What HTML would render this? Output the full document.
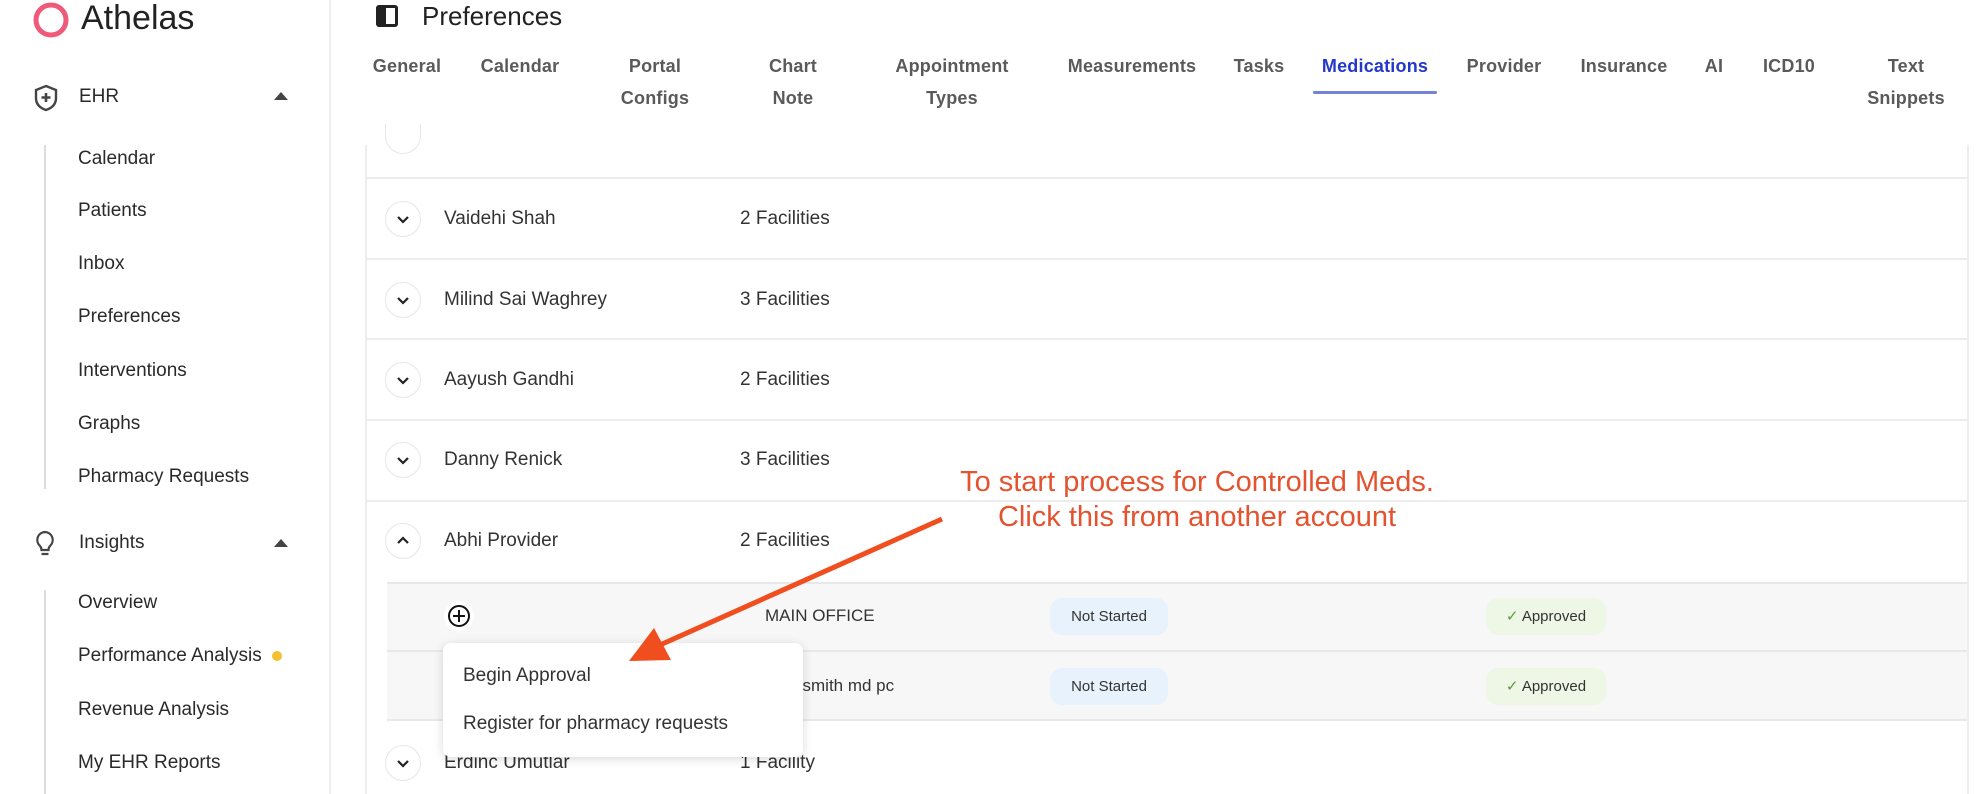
<!DOCTYPE html>
<html><head><meta charset="utf-8"><style>
*{margin:0;padding:0;box-sizing:border-box}
body{width:1983px;height:794px;overflow:hidden;background:#fff;font-family:"Liberation Sans",sans-serif;color:#222;position:relative}
.a{position:absolute;white-space:nowrap}
.side{position:absolute;left:0;top:0;width:331px;height:794px;border-right:2px solid #eee}
.si{position:absolute;left:78px;font-size:19px;color:#2a2a2a;transform:translateY(-50%)}
.tab{position:absolute;font-size:18px;color:#5a5a5a;text-align:center;line-height:32px;transform:translateX(-50%);top:50px;font-weight:bold;letter-spacing:0.2px}
.sep{position:absolute;left:366px;width:1602px;height:2px;background:#ececec}
.chev{position:absolute;width:36px;height:36px;border-radius:50%;border:1px solid #e6e6e6;background:#fff;left:385px}
.chev svg{position:absolute;left:9px;top:9px}
.nm{position:absolute;left:444px;font-size:19px;color:#333;transform:translateY(-50%)}
.fc{position:absolute;left:740px;font-size:19px;color:#333;transform:translateY(-50%)}
.pill{position:absolute;height:37px;border-radius:12px;font-size:15px;color:#333;line-height:37px;text-align:center}
</style></head><body>
<div class="side">
<svg class="a" style="left:32px;top:1px" width="38" height="38"><circle cx="19" cy="19" r="15" fill="none" stroke="#ef5a7a" stroke-width="5"/></svg>
<div class="a" style="left:81px;top:-1px;font-size:34px;color:#222">Athelas</div>
<svg class="a" style="left:33px;top:84px" width="26" height="28" viewBox="0 0 26 28"><path d="M13 2L23 6v8c0 6-4 10-10 12C7 24 3 20 3 14V6z" fill="none" stroke="#444" stroke-width="2.4"/><path d="M13 9v9M8.5 13.5h9" stroke="#444" stroke-width="2.6"/></svg>
<div class="si" style="left:79px;top:97px">EHR</div>
<svg class="a" style="left:274px;top:91px" width="14" height="9"><path d="M0 9L7 1 14 9z" fill="#444"/></svg>
<div class="a" style="left:44px;top:145px;width:2px;height:344px;background:#ddd"></div>
<div class="si" style="top:159px">Calendar</div>
<div class="si" style="top:211px">Patients</div>
<div class="si" style="top:264px">Inbox</div>
<div class="si" style="top:317px">Preferences</div>
<div class="si" style="top:371px">Interventions</div>
<div class="si" style="top:424px">Graphs</div>
<div class="si" style="top:477px">Pharmacy Requests</div>
<svg class="a" style="left:33px;top:530px" width="24" height="28" viewBox="0 0 24 28"><path d="M12 2a8 8 0 0 0-5 14c1 1 1.5 2 1.5 4h7c0-2 .5-3 1.5-4A8 8 0 0 0 12 2zM8.5 24h7" fill="none" stroke="#444" stroke-width="2.2"/></svg>
<div class="si" style="left:79px;top:543px">Insights</div>
<svg class="a" style="left:274px;top:538px" width="14" height="9"><path d="M0 9L7 1 14 9z" fill="#444"/></svg>
<div class="a" style="left:44px;top:590px;width:2px;height:204px;background:#ddd"></div>
<div class="si" style="top:603px">Overview</div>
<div class="si" style="top:656px">Performance Analysis</div>
<div class="a" style="left:272px;top:651px;width:10px;height:10px;border-radius:50%;background:#f5c02f"></div>
<div class="si" style="top:710px">Revenue Analysis</div>
<div class="si" style="top:763px">My EHR Reports</div>
</div>
<div class="a" style="left:376px;top:5px;width:22px;height:22px;border:3px solid #222;border-radius:3px"><div style="width:7px;height:16px;background:#222"></div></div>
<div class="a" style="left:422px;top:1px;font-size:26px;color:#222">Preferences</div>
<div class="tab" style="left:407px">General</div>
<div class="tab" style="left:520px">Calendar</div>
<div class="tab" style="left:655px">Portal<br>Configs</div>
<div class="tab" style="left:793px">Chart<br>Note</div>
<div class="tab" style="left:952px">Appointment<br>Types</div>
<div class="tab" style="left:1132px">Measurements</div>
<div class="tab" style="left:1259px">Tasks</div>
<div class="tab" style="left:1375px;color:#2438c9">Medications</div>
<div class="a" style="left:1313px;top:91px;width:124px;height:3px;background:#7582d6;border-radius:2px"></div>
<div class="tab" style="left:1504px">Provider</div>
<div class="tab" style="left:1624px">Insurance</div>
<div class="tab" style="left:1714px">AI</div>
<div class="tab" style="left:1789px">ICD10</div>
<div class="tab" style="left:1906px">Text<br>Snippets</div>
<div class="a" style="left:365px;top:145px;width:2px;height:649px;background:#eee"></div>
<div class="a" style="left:1967px;top:145px;width:2px;height:649px;background:#eee"></div>
<div class="chev" style="top:124px;border-top:none;height:30px;border-radius:0 0 18px 18px"></div>
<div class="sep" style="top:177px"></div>
<div class="sep" style="top:258px"></div>
<div class="sep" style="top:338px"></div>
<div class="sep" style="top:419px"></div>
<div class="sep" style="top:500px"></div>
<div class="a" style="left:387px;top:582px;width:1580px;height:139px;background:#f7f7f7;border-top:2px solid #e8e8e8;border-bottom:2px solid #e8e8e8"></div>
<div class="a" style="left:387px;top:650px;width:1580px;height:2px;background:#e8e8e8"></div>
<div class="chev" style="top:201px"><svg width="16" height="16"><path d="M3 6l5 5 5-5" fill="none" stroke="#222" stroke-width="2.2"/></svg></div>
<div class="nm" style="top:219px">Vaidehi Shah</div><div class="fc" style="top:219px">2 Facilities</div>
<div class="chev" style="top:282px"><svg width="16" height="16"><path d="M3 6l5 5 5-5" fill="none" stroke="#222" stroke-width="2.2"/></svg></div>
<div class="nm" style="top:300px">Milind Sai Waghrey</div><div class="fc" style="top:300px">3 Facilities</div>
<div class="chev" style="top:362px"><svg width="16" height="16"><path d="M3 6l5 5 5-5" fill="none" stroke="#222" stroke-width="2.2"/></svg></div>
<div class="nm" style="top:380px">Aayush Gandhi</div><div class="fc" style="top:380px">2 Facilities</div>
<div class="chev" style="top:442px"><svg width="16" height="16"><path d="M3 6l5 5 5-5" fill="none" stroke="#222" stroke-width="2.2"/></svg></div>
<div class="nm" style="top:460px">Danny Renick</div><div class="fc" style="top:460px">3 Facilities</div>
<div class="chev" style="top:523px"><svg width="16" height="16"><path d="M3 10l5-5 5 5" fill="none" stroke="#222" stroke-width="2.2"/></svg></div>
<div class="nm" style="top:541px">Abhi Provider</div><div class="fc" style="top:541px">2 Facilities</div>
<div class="chev" style="top:745px"><svg width="16" height="16"><path d="M3 6l5 5 5-5" fill="none" stroke="#222" stroke-width="2.2"/></svg></div>
<div class="nm" style="top:763px">Erdinc Umutlar</div><div class="fc" style="top:763px">1 Facility</div>
<svg class="a" style="left:443px;top:600px" width="32" height="32"><circle cx="16" cy="16" r="15" fill="#fff"/><circle cx="16" cy="16" r="10" fill="none" stroke="#111" stroke-width="2"/><path d="M16 10v12M10 16h12" stroke="#111" stroke-width="2"/></svg>
<div class="a" style="left:765px;top:606px;font-size:17px;color:#333">MAIN OFFICE</div>
<div class="a" style="left:794px;top:676px;font-size:17px;color:#333">j smith md pc</div>
<div class="pill" style="left:1050px;top:598px;width:118px;background:#e8f2fc">Not Started</div>
<div class="pill" style="left:1050px;top:668px;width:118px;background:#e8f2fc">Not Started</div>
<div class="pill" style="left:1486px;top:598px;width:120px;background:#eef7e6"><span style="color:#5a9a3a">✓</span> Approved</div>
<div class="pill" style="left:1486px;top:668px;width:120px;background:#eef7e6"><span style="color:#5a9a3a">✓</span> Approved</div>
<div class="a" style="left:443px;top:643px;width:360px;height:114px;background:#fff;border-radius:8px;box-shadow:0 2px 10px rgba(0,0,0,.15)"></div>
<div class="a" style="left:463px;top:665px;font-size:19px;color:#333">Begin Approval</div>
<div class="a" style="left:463px;top:713px;font-size:19px;color:#333">Register for pharmacy requests</div>
<div class="a" style="left:917px;top:465px;font-size:29px;color:#e4532f;line-height:35px;text-align:center;width:560px">To start process for Controlled Meds.<br>Click this from another account</div>
<svg class="a" style="left:0;top:0" width="1983" height="794"><line x1="942" y1="519" x2="660" y2="645" stroke="#f04e1f" stroke-width="5"/><path d="M629 661L654 628 671 660z" fill="#f04e1f"/></svg>
</body></html>
